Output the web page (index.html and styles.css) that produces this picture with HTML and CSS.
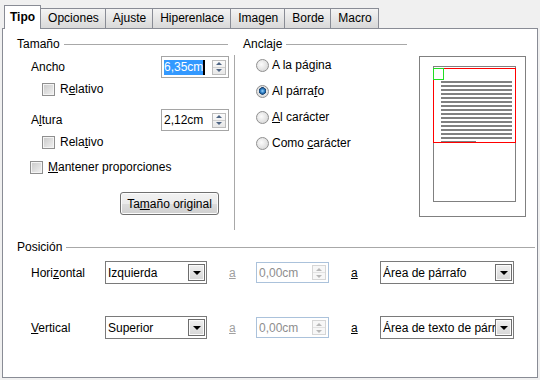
FILE: index.html
```html
<!DOCTYPE html>
<html lang="es">
<head>
    <meta charset="UTF-8">
    <title>Tipo</title>
    <link rel="stylesheet" href="styles.css">
</head>
<body>
<div class="tabs">
    <div class="tab active">Tipo</div>
    <div class="tab">Opciones</div>
    <div class="tab">Ajuste</div>
    <div class="tab">Hiperenlace</div>
    <div class="tab">Imagen</div>
    <div class="tab">Borde</div>
    <div class="tab">Macro</div>
</div>
<div class="panel">
    <div class="top">
        <div class="size-col">
            <div class="group-head"><span>Tamaño</span><i class="rule"></i></div>
            <div class="field-row first">
                <label>Ancho</label>
                <div class="spin">
                    <span class="value"><span class="sel">6,35cm</span><span class="caret"></span></span>
                    <span class="arrows"><span class="up"></span><span class="down"></span></span>
                </div>
            </div>
            <div class="check-row sub"><span class="check"></span><span>R<u>e</u>lativo</span></div>
            <div class="field-row second">
                <label>A<u>l</u>tura</label>
                <div class="spin">
                    <span class="value">2,12cm</span>
                    <span class="arrows"><span class="up"></span><span class="down"></span></span>
                </div>
            </div>
            <div class="check-row sub"><span class="check"></span><span>Rela<u>t</u>ivo</span></div>
            <div class="check-row keep"><span class="check"></span><span><u>M</u>antener proporciones</span></div>
            <button class="button">Ta<u>m</u>año original</button>
        </div>
        <div class="anchor-col">
            <div class="group-head"><span>Anclaje</span><i class="rule"></i></div>
            <div class="anchor-body">
                <div class="radio-row"><span class="radio"></span><span>A la pá<u>g</u>ina</span></div>
                <div class="radio-row"><span class="radio on"></span><span>Al párra<u>f</u>o</span></div>
                <div class="radio-row"><span class="radio"></span><span><u>A</u>l carácter</span></div>
                <div class="radio-row"><span class="radio"></span><span>Como <u>c</u>arácter</span></div>
            </div>
        </div>
        <div class="preview">
            <svg width="107" height="161" viewBox="0 0 107 161">
                <rect x="0.5" y="0.5" width="106" height="160" fill="#fff" stroke="#808080"/>
                <rect x="14.5" y="10.5" width="82" height="135" fill="none" stroke="#808080"/>
                <g fill="#808080">
                    <rect x="22" y="25" width="71" height="2"/>
                    <rect x="22" y="29" width="71" height="2"/>
                    <rect x="22" y="33" width="71" height="2"/>
                    <rect x="22" y="37" width="71" height="2"/>
                    <rect x="22" y="41" width="71" height="2"/>
                    <rect x="22" y="45" width="71" height="2"/>
                    <rect x="22" y="49" width="71" height="2"/>
                    <rect x="22" y="53" width="71" height="2"/>
                    <rect x="22" y="57" width="71" height="2"/>
                    <rect x="22" y="61" width="71" height="2"/>
                    <rect x="22" y="65" width="71" height="2"/>
                    <rect x="22" y="69" width="71" height="2"/>
                    <rect x="22" y="73" width="71" height="2"/>
                    <rect x="22" y="77" width="71" height="2"/>
                    <rect x="22" y="81" width="71" height="2"/>
                    <rect x="22" y="85" width="35" height="2"/>
                </g>
                <rect x="14.5" y="12.5" width="82" height="74" fill="none" stroke="#ff0000"/>
                <rect x="14.5" y="12.5" width="10" height="11" fill="none" stroke="#22dd22"/>
            </svg>
        </div>
    </div>
    <div class="pos">
        <div class="group-head"><span>Posición</span><i class="rule"></i></div>
        <div class="pos-row">
            <label>Hori<u>z</u>ontal</label>
            <div class="select small"><span class="text">Izquierda</span><span class="drop"></span></div>
            <u class="to disabled">a</u>
            <div class="spin off">
                <span class="value">0,00cm</span>
                <span class="arrows"><span class="up"></span><span class="down"></span></span>
            </div>
            <u class="to">a</u>
            <div class="select wide"><span class="text">Área de párrafo</span><span class="drop"></span></div>
        </div>
        <div class="pos-row lower">
            <label><u>V</u>ertical</label>
            <div class="select small"><span class="text">Superior</span><span class="drop"></span></div>
            <u class="to disabled">a</u>
            <div class="spin off">
                <span class="value">0,00cm</span>
                <span class="arrows"><span class="up"></span><span class="down"></span></span>
            </div>
            <u class="to">a</u>
            <div class="select wide"><span class="text">Área de texto de párrafo</span><span class="drop"></span></div>
        </div>
    </div>
</div>
</body>
</html>
```

FILE: styles.css
```css
body {
    margin: 0;
    background-color: #f0f0f0;
    font-family: "Liberation Sans", Arial, sans-serif;
    font-size: 12px;
    color: #000;
}
u {
    text-decoration: underline;
}

/* pestañas */
.tabs {
    display: flex;
    align-items: flex-end;
    height: 28px;
    padding-left: 4px;
    position: relative;
    z-index: 1;
}
.tab {
    height: 20px;
    line-height: 19px;
    padding: 0 6px 0 7px;
    margin-left: -1px;
    box-sizing: border-box;
    border: 1px solid #898c95;
    border-bottom: none;
    background: linear-gradient(#f4f4f4, #e6e6e6 50%, #d9d9d9);
}
.tab.active {
    height: 24px;
    line-height: 22px;
    padding: 0 5px;
    margin-left: 0;
    margin-bottom: -1px;
    font-weight: bold;
    background: #fff;
}

/* panel */
.panel {
    margin-left: 2px;
    width: 536px;
    height: 350px;
    box-sizing: border-box;
    border: 1px solid #898c95;
    background: #fff;
}
.top {
    display: flex;
    height: 205px;
}
.group-head {
    display: flex;
    align-items: center;
    height: 14px;
    line-height: 14px;
}
.group-head .rule {
    flex: 1;
    height: 0;
    margin-left: 4px;
    border-top: 1px solid #a8a8a8;
}

/* tamaño */
.size-col {
    width: 231px;
    box-sizing: border-box;
    padding: 8px 5px 0 14px;
}
.size-col .group-head {
    margin-right: 1px;
}
.field-row {
    display: flex;
    align-items: center;
    height: 22px;
    padding-left: 14px;
}
.field-row label {
    flex: 1;
}
.field-row.first {
    margin-top: 5px;
}
.field-row.second {
    margin-top: 10px;
}
.spin {
    display: flex;
    align-items: center;
    width: 68px;
    height: 22px;
    box-sizing: border-box;
    border: 1px solid #a5a5a5;
    padding: 0 2px 0 2px;
    background: #fff;
}
.spin .value {
    flex: 1;
    display: flex;
    align-items: center;
}
.sel {
    background: #3399ff;
    color: #fff;
    line-height: 15px;
}
.caret {
    width: 2px;
    height: 15px;
    background: #000;
}
.arrows {
    display: flex;
    flex-direction: column;
    width: 14px;
    height: 15px;
    box-sizing: border-box;
    border: 1px solid #bcbcbc;
    background: linear-gradient(#fbfbfb, #e8e8e8);
}
.arrows span {
    flex: 1;
    display: flex;
    align-items: center;
    justify-content: center;
}
.arrows .up {
    border-bottom: 1px solid #d0d0d0;
}
.arrows .up::before,
.arrows .down::before {
    content: "";
    border-left: 3px solid transparent;
    border-right: 3px solid transparent;
}
.arrows .up::before {
    border-bottom: 3px solid #4e6584;
}
.arrows .down::before {
    border-top: 3px solid #4e6584;
}
.check-row {
    display: flex;
    align-items: center;
    gap: 5px;
    height: 20px;
}
.check-row.sub {
    padding-left: 25px;
    margin-top: 1px;
}
.check-row.keep {
    padding-left: 13px;
    margin-top: 5px;
}
.check {
    width: 13px;
    height: 13px;
    box-sizing: border-box;
    border: 1px solid #8f8f8f;
    background: linear-gradient(135deg, #c8c8c8, #f2f2f2);
    box-shadow: inset 0 0 0 1px #f4f4f4;
}
.button {
    display: block;
    margin: 15px 0 0 103px;
    width: 99px;
    height: 23px;
    padding: 0;
    border: 1px solid #707070;
    border-radius: 3px;
    background: linear-gradient(#f2f2f2, #ebebeb 50%, #dddddd 51%, #cfcfcf);
    box-shadow: inset 0 0 0 1px #fcfcfc;
    font-family: inherit;
    font-size: 12px;
    color: #000;
}

/* anclaje */
.anchor-col {
    width: 173px;
    padding-top: 8px;
}
.anchor-col .group-head {
    padding-left: 9px;
}
.anchor-body {
    margin-top: 4px;
    height: 175px;
    box-sizing: border-box;
    border-left: 1px solid #a8a8a8;
    padding: 2px 0 0 21px;
}
.radio-row {
    display: flex;
    align-items: center;
    gap: 3px;
    height: 16px;
    margin-bottom: 10px;
}
.radio {
    width: 13px;
    height: 13px;
    box-sizing: border-box;
    border-radius: 50%;
    border: 1px solid #8f8f8f;
    background: radial-gradient(circle at 40% 40%, #fbfbfb, #d0d0d0);
}
.radio.on {
    background: radial-gradient(circle at 50% 45%, #9bd6ff 0, #2f80c6 2px, #173f6b 3.5px, #e6e6e6 4px, #d0d0d0 100%);
}
.preview {
    margin-left: 12px;
    padding-top: 27px;
}
.preview svg {
    display: block;
}

/* posición */
.pos {
    padding: 6px 2px 0 14px;
}
.pos-row {
    display: flex;
    align-items: center;
    height: 23px;
    margin-top: 7px;
    padding-left: 14px;
}
.pos-row.lower {
    margin-top: 32px;
}
.pos-row label {
    width: 74px;
}
.select {
    display: flex;
    align-items: center;
    height: 23px;
    box-sizing: border-box;
    border: 1px solid #7a7a7a;
    padding-left: 2px;
    background: #fff;
}
.select.small {
    width: 102px;
}
.select.wide {
    width: 134px;
    margin-left: 22px;
}
.select .text {
    flex: 1;
    overflow: hidden;
    white-space: nowrap;
}
.drop {
    display: flex;
    align-items: center;
    justify-content: center;
    width: 17px;
    height: 17px;
    margin-right: 1px;
    box-sizing: border-box;
    border: 1px solid #6d6d6d;
    background: linear-gradient(#f0f0f0, #d6d6d6);
    box-shadow: inset 0 0 0 1px #fafafa;
}
.drop::before {
    content: "";
    border-left: 4px solid transparent;
    border-right: 4px solid transparent;
    border-top: 4px solid #000;
}
.to {
    margin-left: 22px;
    width: 7px;
}
.to.disabled {
    color: #a0a0a0;
}
.spin.off {
    width: 73px;
    height: 21px;
    margin-left: 20px;
    border-color: #abc2db;
    color: #8e8e8e;
}
.spin.off .arrows {
    border-color: #d6d6d6;
    background: #f7f7f7;
}
.spin.off .arrows .up {
    border-bottom-color: #e2e2e2;
}
.spin.off .arrows .up::before {
    border-bottom-color: #b8b8b8;
}
.spin.off .arrows .down::before {
    border-top-color: #b8b8b8;
}
```
